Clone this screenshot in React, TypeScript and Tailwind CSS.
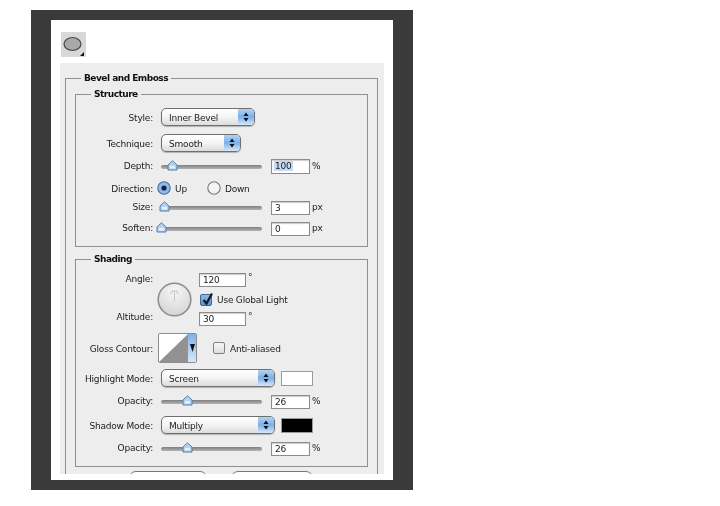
import React from "react";

const font = "[font-family:'DejaVu_Sans',sans-serif]";

function Label({ children, low = false }: { children: React.ReactNode; low?: boolean }) {
  return <div className={`w-[77px] shrink-0 text-right whitespace-nowrap ${low ? "pt-[3px]" : ""}`}>{children}</div>;
}

function Select({ text, width }: { text: string; width: string }) {
  return (
    <div className={`${width} ml-[8px] h-[18px] flex rounded-[5px] border border-[#6f6f6f] bg-gradient-to-b from-[#ffffff] via-[#f4f4f4] to-[#dcdcdc] shadow-[0_1px_1px_rgba(0,0,0,0.25)] overflow-hidden`}>
      <div className="flex-1 pl-[7px] leading-[18px] whitespace-nowrap">{text}</div>
      <div className="w-[16px] flex items-center justify-center bg-gradient-to-b from-[#b4d3f4] via-[#79afe8] to-[#d6e9fb]">
        <svg width="8" height="12" viewBox="0 0 8 12">
          <path d="M4 1.5 L6.5 5 H1.5 Z" fill="#111" />
          <path d="M4 10.5 L6.5 7 H1.5 Z" fill="#111" />
        </svg>
      </div>
    </div>
  );
}

function TextBox({ value, width = "w-[39px]", height = "h-[14px]", selected = false }: { value: string; width?: string; height?: string; selected?: boolean }) {
  return (
    <div className={`${width} ${height} border border-[#8c8c8c] bg-white pl-[3px] leading-[13px] text-[#222] shadow-[inset_0_1px_1px_rgba(0,0,0,0.2)]`}>
      {selected ? <span className="bg-[#c3d9f5] px-[1px] -ml-[1px]">{value}</span> : value}
    </div>
  );
}

function Slider({ thumb, value, unit, inputHeight }: { thumb: number; value: string; unit: string; inputHeight?: string }) {
  return (
    <>
      <div className="relative ml-[8px] w-[101px] h-[4px] rounded-full bg-gradient-to-b from-[#7f7f7f] to-[#b4b4b4]">
        <svg className="absolute top-[-5px]" style={{ left: thumb - 5.5 }} width="11" height="11" viewBox="0 0 11 11">
          <path d="M5.5 0.8 L10 5 V10 H1 V5 Z" fill="#b5d2ee" stroke="#4f7fae" strokeWidth="1" />
          <path d="M3 6 H8 V8.5 H3 Z" fill="#e6f1fb" />
        </svg>
      </div>
      <div className="ml-[9px]">
        <TextBox value={value} height={inputHeight} selected={value === "100"} />
      </div>
      <div className="ml-[2px]">{unit}</div>
    </>
  );
}

function Radio({ checked }: { checked?: boolean }) {
  return (
    <svg width="14" height="14" viewBox="0 0 14 14" className="shrink-0">
      <circle cx="7" cy="7" r="6.2" fill={checked ? "#8fbbe8" : "#f4f4f4"} stroke={checked ? "#3f6f9f" : "#777"} strokeWidth="1.1" />
      {checked && <circle cx="7" cy="7" r="2.6" fill="#16233a" />}
    </svg>
  );
}

function Box({ title, titleClass, className, children }: { title: string; titleClass: string; className: string; children: React.ReactNode }) {
  return (
    <div className={`relative border border-[#8f8f8f] ${className}`}>
      <div className={`absolute top-[-8px] bg-[#ededed] px-[3px] leading-[14px] font-bold tracking-[-0.5px] text-[#111] whitespace-nowrap ${titleClass}`}>{title}</div>
      {children}
    </div>
  );
}

export default function App() {
  return (
    <div className={`w-[720px] h-[506px] bg-white pt-[10px] pl-[31px] overflow-hidden text-[9px] tracking-[-0.2px] text-[#222] ${font}`}>
      <div className="w-[382px] h-[480px] bg-[#3a3a3a] px-[20px] py-[10px] blur-[0.35px]">
        <div className="w-[342px] h-[460px] bg-white px-[9px] pt-[12px] overflow-hidden">
          <div className="ml-[1px] w-[25px] h-[25px] bg-[#d8d8d8] relative">
            <svg width="25" height="25" viewBox="0 0 25 25">
              <ellipse cx="11.5" cy="12" rx="8.5" ry="6.5" fill="#a8a8a8" stroke="#4a4a4a" strokeWidth="1.2" />
              <path d="M23 20 V24 H19 Z" fill="#111" />
            </svg>
          </div>
          <div className="mt-[6px] w-[324px] h-[411px] bg-[#ededed] pl-[5px] pt-[15px] overflow-hidden">
            <Box title="Bevel and Emboss" titleClass="left-[15px]" className="w-[313px] h-[460px] px-[9px] pt-[15px]">
              <Box title="Structure" titleClass="left-[15px]" className="w-[293px] h-[153px] pt-[13px]">
                <div className="flex items-center h-[18px]">
                  <Label low>Style:</Label>
                  <Select text="Inner Bevel" width="w-[94px]" />
                </div>
                <div className="flex items-center h-[18px] mt-[8px]">
                  <Label low>Technique:</Label>
                  <Select text="Smooth" width="w-[80px]" />
                </div>
                <div className="flex items-center h-[15px] mt-[7px]">
                  <Label>Depth:</Label>
                  <Slider thumb={11} value="100" unit="%" inputHeight="h-[15px]" />
                </div>
                <div className="flex items-center h-[14px] mt-[7px]">
                  <Label low>Direction:</Label>
                  <div className="ml-[4px] flex items-center">
                    <Radio checked />
                    <span className="ml-[4px] pt-[3px]">Up</span>
                    <div className="ml-[20px]"><Radio /></div>
                    <span className="ml-[4px] pt-[3px]">Down</span>
                  </div>
                </div>
                <div className="flex items-center h-[14px] mt-[6px]">
                  <Label>Size:</Label>
                  <Slider thumb={3} value="3" unit="px" />
                </div>
                <div className="flex items-center h-[14px] mt-[7px]">
                  <Label>Soften:</Label>
                  <Slider thumb={0} value="0" unit="px" />
                </div>
              </Box>
              <Box title="Shading" titleClass="left-[15px]" className="w-[293px] h-[208px] mt-[12px] pt-[13px]">
                <div className="flex h-[53px]">
                  <div className="w-[77px] shrink-0 flex flex-col justify-between items-end pb-[2px]">
                    <div>Angle:</div>
                    <div>Altitude:</div>
                  </div>
                  <svg className="ml-[4px] self-center shrink-0" width="35" height="35" viewBox="0 0 35 35">
                    <defs>
                      <radialGradient id="dial" cx="50%" cy="25%" r="80%">
                        <stop offset="0%" stopColor="#f7f7f7" />
                        <stop offset="100%" stopColor="#d2d2d2" />
                      </radialGradient>
                    </defs>
                    <circle cx="17.5" cy="17.5" r="16.3" fill="url(#dial)" stroke="#8d8d8d" strokeWidth="1.6" />
                    <path d="M17.5 8 V19 M14 9 H21 M13 12 L16 10 M22 12 L19 10" stroke="#c6c6c6" strokeWidth="1" fill="none" />
                  </svg>
                  <div className="ml-[7px] flex flex-col justify-between">
                    <div className="flex">
                      <TextBox value="120" width="w-[47px]" />
                      <span className="ml-[2px] leading-[9px]">°</span>
                    </div>
                    <div className="flex items-center">
                      <div className="ml-[1px] w-[12px] h-[12px] rounded-[2px] border border-[#43688f] bg-gradient-to-b from-[#8fbbe8] to-[#5d94d2] relative">
                        <svg className="absolute left-[0px] top-[-3px]" width="13" height="14" viewBox="0 0 13 14">
                          <path d="M2.5 8 L5.5 11.5 L11 1.5" stroke="#101a2a" strokeWidth="2.2" fill="none" />
                        </svg>
                      </div>
                      <span className="ml-[5px] pt-[2px] whitespace-nowrap">Use Global Light</span>
                    </div>
                    <div className="flex">
                      <TextBox value="30" width="w-[47px]" />
                      <span className="ml-[2px] leading-[9px]">°</span>
                    </div>
                  </div>
                </div>
                <div className="flex items-center h-[30px] mt-[7px]">
                  <Label low>Gloss Contour:</Label>
                  <div className="ml-[5px] w-[39px] h-[30px] flex border border-[#8c8c8c] rounded-[2px] overflow-hidden bg-white">
                    <svg width="29" height="28" viewBox="0 0 29 28" className="shrink-0">
                      <path d="M0 28 L29 0 V28 Z" fill="#929292" />
                    </svg>
                    <div className="flex-1 flex items-center justify-center bg-gradient-to-b from-[#7fb1e8] to-[#d5e8fb]">
                      <svg width="5" height="8" viewBox="0 0 5 8"><path d="M0 0 H5 L2.5 8 Z" fill="#111" /></svg>
                    </div>
                  </div>
                  <div className="ml-[16px] w-[12px] h-[12px] rounded-[2px] border border-[#808080] bg-gradient-to-b from-[#f6f6f6] to-[#dedede]" />
                  <span className="ml-[5px] pt-[3px] whitespace-nowrap">Anti-aliased</span>
                </div>
                <div className="flex items-center h-[18px] mt-[6px]">
                  <Label low>Highlight Mode:</Label>
                  <Select text="Screen" width="w-[114px]" />
                  <div className="ml-[6px] w-[32px] h-[15px] bg-white border border-[#9a9a9a]" />
                </div>
                <div className="flex items-center h-[14px] mt-[8px]">
                  <Label>Opacity:</Label>
                  <Slider thumb={26} value="26" unit="%" />
                </div>
                <div className="flex items-center h-[18px] mt-[7px]">
                  <Label low>Shadow Mode:</Label>
                  <Select text="Multiply" width="w-[114px]" />
                  <div className="ml-[6px] w-[32px] h-[15px] bg-black border border-[#9a9a9a]" />
                </div>
                <div className="flex items-center h-[14px] mt-[8px]">
                  <Label>Opacity:</Label>
                  <Slider thumb={26} value="26" unit="%" />
                </div>
              </Box>
              <div className="mt-[4px] ml-[54px] flex">
                <div className="w-[78px] h-[20px] rounded-[7px] border border-[#777] bg-white" />
                <div className="ml-[24px] w-[82px] h-[20px] rounded-[7px] border border-[#777] bg-white" />
              </div>
            </Box>
          </div>
        </div>
      </div>
    </div>
  );
}
